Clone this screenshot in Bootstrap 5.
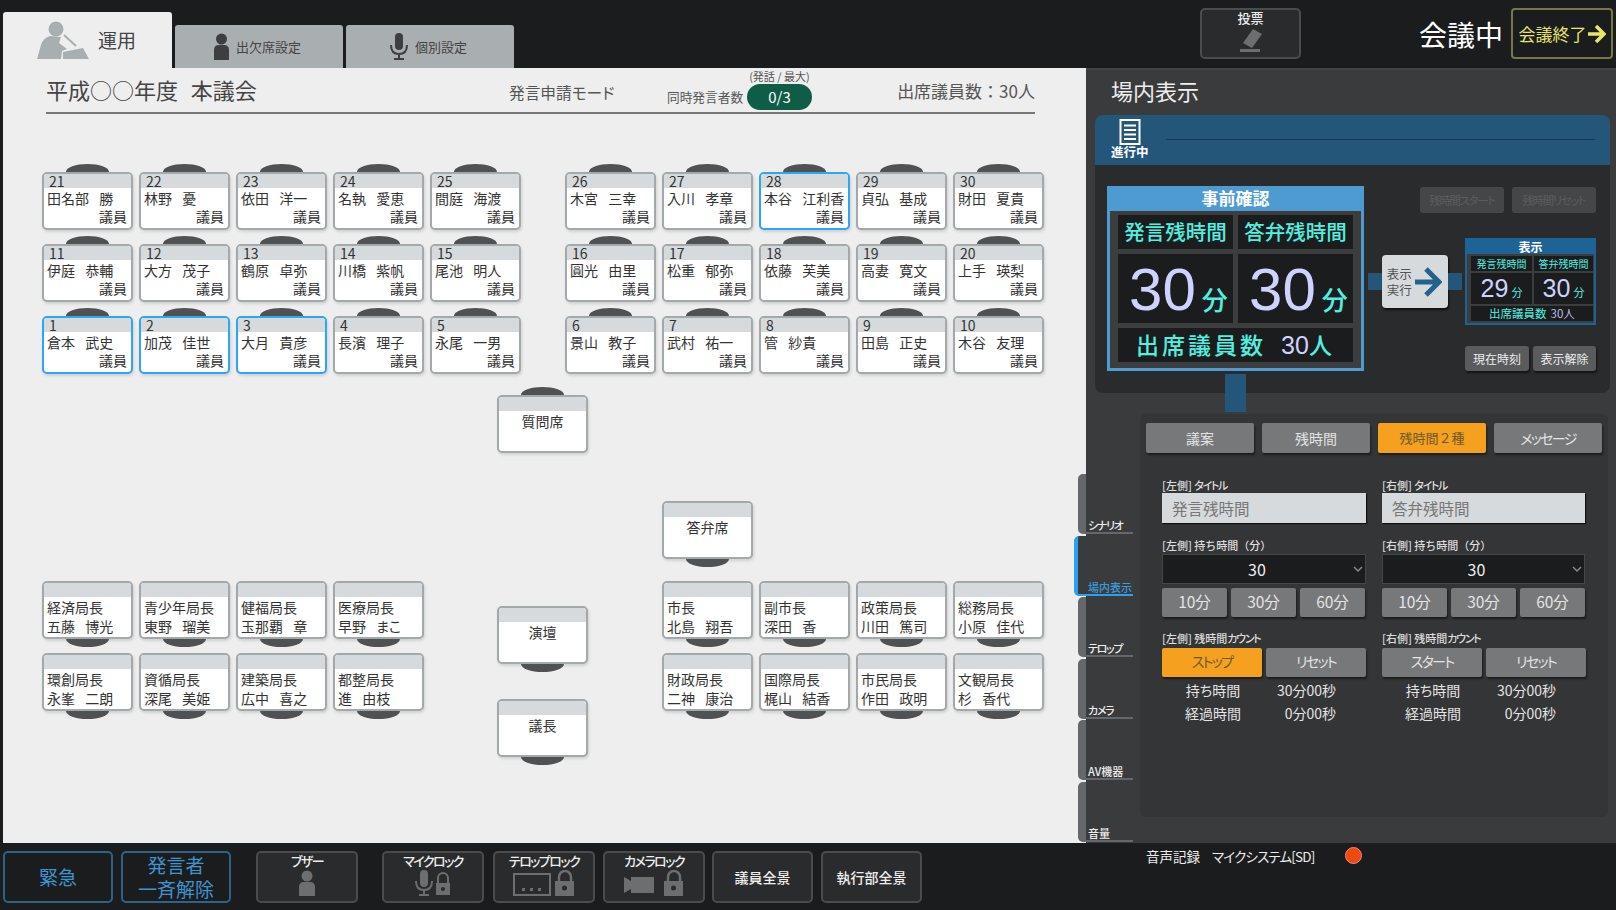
<!DOCTYPE html>
<html lang="ja">
<head>
    <meta charset="UTF-8">
    <meta name="viewport" content="width=device-width, initial-scale=1.0">
    <title>会議運用</title>
    <link rel="stylesheet" href="https://cdn.jsdelivr.net/npm/bootstrap@5.3.2/dist/css/bootstrap.min.css">
    <style>
        html, body { height: 910px; overflow: hidden; }
        body { background: #1b1c1e; font-family: "Noto Sans CJK JP", "Noto Sans", sans-serif; color: #333; font-feature-settings: "palt"; }
        svg { display: block; }
        /* narrow kana of the original UI font */
        .nk { letter-spacing: -.12em; }
        .full-w { font-feature-settings: normal; }

        /* top bar */
        .top-bar { height: 68px; padding-left: 3px; }
        .tab-main { width: 169px; height: 56px; margin-top: 12px; background: #eee; border-radius: 3px 3px 0 0; padding-left: 34px; gap: 9px; font-size: 19px; color: #444; }
        .tab-sub { width: 168px; height: 43px; margin: 25px 0 0 3px; background: #a9aeb0; border-radius: 3px 3px 0 0; gap: 7px; padding-right: 3px; font-size: 13px; color: #444; }
        .dark-btn { background: #2a2b2d; border: 2px solid #4b4c4e; border-radius: 5px; color: #eee; font-size: 13px; line-height: 15px; font-weight: 500; }
        .vote-btn { width: 101px; height: 51px; margin: 8px 0 0 auto; gap: 3px; }
        .status-txt { width: 85px; margin: 0 0 0 118px; color: #fff; font-size: 28px; line-height: 68px; white-space: nowrap; }
        .end-btn { width: 102px; height: 51px; margin: 8px 3px 0 7px; border: 2px solid #77774a; border-radius: 4px; color: #e6e66a; font-size: 17px; gap: 1px; white-space: nowrap; }

        /* main area */
        .mid-row { height: 775px; }
        .main-area { width: 1083px; margin-left: 3px; background: #eee; }
        .main-head { height: 46px; margin: 0 51px 0 43px; border-bottom: 2px solid #777; }
        .main-title { font-size: 22px; line-height: 42px; width: 463px; white-space: pre; color: #444; word-spacing: 1.5px; }
        .mode-txt { font-size: 15.7px; width: 158px; margin-top: 13px; color: #555; white-space: nowrap; }
        .count-txt { font-size: 12.7px; margin-top: 19px; width: 80px; color: #555; white-space: nowrap; }
        .count-wrap { width: 65px; position: relative; margin-top: 16px; }
        .count-cap { position: absolute; top: -15px; left: -8px; width: 81px; text-align: center; font-size: 11px; line-height: 14px; color: #555; }
        .count-pill { height: 26px; border-radius: 13px; background: #0f5c47; color: #fff; font-size: 15px; line-height: 26px; text-align: center; }
        .attend-txt { font-size: 17px; margin: 10px 0 0 auto; color: #555; white-space: nowrap; font-feature-settings: normal; }

        /* seating plan: seats sit on a free canvas */
        .floor { height: 729px; }
        .seat-group { position: absolute; display: grid; grid-template-columns: repeat(5, 91px); column-gap: 6px; row-gap: 14px; }
        .seat-group.four { grid-template-columns: repeat(4, 91px); }
        .seat-box { position: relative; width: 91px; height: 58px; background: #fff; border: 2px solid #a3a8aa; border-radius: 5px; box-shadow: 1px 2px 3px rgba(0,0,0,.12); font-size: 14px; line-height: 18px; color: #333; }
        .seat-box.on { border-color: #2ea6f5; }
        .seat-box::before { content: ""; position: absolute; left: 22px; width: 43px; height: 8px; background: #505153; }
        .seat-box.up::before { top: -10px; border-radius: 50% 50% 0 0 / 100% 100% 0 0; }
        .seat-box.down::before { bottom: -10px; border-radius: 0 0 50% 50% / 0 0 100% 100%; }
        .seat-no { height: 14px; background: #d6dadd; border-radius: 3px 3px 0 0; padding-left: 5px; line-height: 15px; font-size: 14px; }
        .seat-name { padding-left: 3px; margin-top: 1px; word-spacing: 7px; white-space: nowrap; }
        .seat-role { text-align: right; padding-right: 4px; }
        .seat-mid { text-align: center; margin-top: 1px; }
        .seat-single { position: absolute; }

        /* right panel */
        .right-area { width: 530px; background: #3a3b3d; border-top: 2px solid #444; }
        .right-title { margin: 0 0 4px; padding-left: 25px; font-size: 22px; line-height: 41px; color: #eee; font-weight: 400; }
        .disp-head { height: 50px; margin: 0 6px 0 9px; background: #24567a; border-radius: 8px 8px 0 0; padding-left: 16px; }
        .doc-wrap { width: 55px; color: #fff; font-size: 12.5px; line-height: 14px; font-weight: 700; white-space: nowrap; margin-top: 4px; }
        .disp-line { height: 1px; flex: 1; background: #183a54; margin: 24px 15px 0 0; }
        .disp-body { height: 228px; margin: 0 6px 0 9px; background: #2a2b2d; border-radius: 0 0 8px 8px; padding: 21px 14px 0 12px; }

        .prev-box { width: 257px; height: 185px; background: #3c3d3f; border: 3px solid #4e9bd2; }
        .prev-head { height: 24px; margin: -2px 0 0; background: #4e9bd2; color: #fff; font-size: 17px; line-height: 22px; font-weight: 700; text-align: center; }
        .prev-grid { display: grid; grid-template-columns: 115px 115px; gap: 5px; padding: 4px 8px; }
        .prev-cell { background: #1b1c1e; color: #4ff0e0; text-align: center; white-space: nowrap; }
        .prev-label { height: 34px; font-size: 20.5px; line-height: 33px; font-weight: 500; font-feature-settings: normal; }
        .prev-num { height: 69px; padding: 3px 0 0 6px; line-height: 66px; font-size: 26px; font-weight: 500; }
        .big-num { font-family: "Liberation Sans", Arial, sans-serif; font-size: 60px; line-height: 66px; color: #cfd2ff; margin-right: 6px; font-weight: 400; }
        .prev-foot { grid-column: 1 / 3; height: 34px; line-height: 33px; font-size: 23px; font-weight: 500; letter-spacing: 3px; }
        .prev-foot span { font-family: "Liberation Sans", Arial, sans-serif; font-size: 25px; color: #cfd2ff; margin-left: 15px; letter-spacing: 0; font-weight: 400; }

        .side-col { width: 232px; height: 184px; margin-top: 1px; }
        .ghost-btn { width: 84px; height: 26px; background: #454648; border-radius: 3px; color: #5c5d5f; font-size: 11.5px; line-height: 26px; text-align: center; white-space: nowrap; }
        .link-bar { width: 14px; height: 17px; background: #24567a; }
        .exec-mid { margin-top: 4px; }
        .exec-btn { width: 67px; height: 53px; background: #d6dadd; border-radius: 4px; box-shadow: 1px 2px 2px #111; color: #555; font-size: 12.5px; line-height: 16px; gap: 2px; padding-left: 5px; }
        .mini-box { width: 131px; height: 87px; margin-left: 3px; background: #3c3d3f; border: 2px solid #1e6396; }
        .mini-head { height: 14px; background: #1e6396; color: #fff; font-size: 12px; line-height: 14px; font-weight: 700; text-align: center; }
        .mini-grid { display: grid; grid-template-columns: 61px 59px; gap: 2px; padding: 2px 4px; }
        .mini-label { height: 15px; font-size: 10px; line-height: 15px; }
        .mini-num { height: 31px; font-size: 11px; line-height: 30px; }
        .mini-num b { font-family: "Liberation Sans", Arial, sans-serif; font-size: 25px; font-weight: 400; color: #cfd2ff; margin-right: 3px; }
        .mini-foot { grid-column: 1 / 3; height: 15px; font-size: 11.5px; line-height: 15px; }
        .mini-foot span { color: #bcbfe6; margin-left: 4px; }
        .sm-btn { height: 25px; background: #5a5b5d; border-radius: 3px; box-shadow: 1px 2px 2px #151515; color: #eee; font-size: 12px; line-height: 25px; text-align: center; }
        .link-down { position: absolute; left: 139px; top: 304px; width: 21px; height: 38px; background: #24567a; }

        /* side tabs lie over the edge of the main area */
        .side-tabs { position: absolute; left: -8px; top: 404px; width: 55px; }
        .side-tab { position: relative; height: 60px; margin-bottom: 1.5px; padding-left: 2px; color: #eee; font-size: 11px; font-weight: 500; line-height: 14px; background: #3a3b3d; border-left: 8px solid #66676a; border-radius: 5px 0 0 5px; display: flex; align-items: flex-end; padding-bottom: 2px; white-space: nowrap; }
        .side-tab::after { content: ""; position: absolute; left: 0; right: 0; bottom: 0; height: 2px; background: #66676a; }
        .side-tab.now { color: #3a9ad9; border-left: 4px solid #2d9ff0; margin-left: -4px; padding-left: 10px; width: 59px; }
        .side-tab.now::after { background: #2d9ff0; }

        .ctrl-area { height: 403px; margin: 21px 8px 0 54px; background: #343537; border-radius: 6px; padding: 9px 6px; }
        .kind-row { display: grid; grid-template-columns: repeat(4, 108px); gap: 8px; }
        .gray-btn { background: #76787a; border-radius: 2px; box-shadow: 1px 2px 2px #1c1c1c; color: #e4e4e4; text-align: center; white-space: nowrap; }
        .gray-btn.orange { background: #f5a01e; color: #6e5a2c; }
        .kind-row .gray-btn { height: 30px; line-height: 30px; font-size: 14px; }
        .kind-row .full-w { font-size: 13px; }
        .ctrl-grid { display: grid; grid-template-columns: 204px 203px; column-gap: 16px; margin: 26px 0 0 16px; }
        .ctrl-label { height: 14px; font-size: 11px; line-height: 13px; color: #ddd; font-weight: 500; white-space: nowrap; }
        .title-input { height: 30px; background: #d6dadd; box-shadow: 1px 1px 1px #111; color: #777; font-size: 15.5px; line-height: 30px; padding-left: 10px; }
        .min-select { height: 30px; margin-top: 1px; padding-right: 14px; background-color: #1b1c1e; border: 1px solid #464749; color: #eee; font-size: 16px; line-height: 28px; text-align: center; position: relative; }
        .sel-caret { position: absolute; right: 2px; top: 11px; }
        .min-row { display: grid; grid-template-columns: repeat(3, 65px); gap: 4px; margin-top: 4px; }
        .min-row .gray-btn { height: 29px; line-height: 27px; font-size: 15.5px; }
        .cnt-row { display: grid; grid-template-columns: repeat(2, 100px); gap: 4px; margin-top: 2px; }
        .cnt-row .gray-btn { height: 29px; line-height: 27px; font-size: 14px; }
        .time-row { display: flex; height: 23px; line-height: 23px; font-size: 14px; color: #e4e4e4; white-space: nowrap; }
        .time-row.first { margin-top: 2px; }
        .time-row span:first-child { width: 102px; text-align: center; }
        .time-row span:last-child { width: 72px; text-align: right; }
        .sp16 { margin-top: 16px; }
        .sp15 { margin-top: 15px; }

        /* bottom bar */
        .bottom-bar { height: 67px; padding: 8px 0 0 3px; }
        .blue-btn { width: 110px; height: 52px; background: #1b1c1e; border: 2px solid #2d6388; border-radius: 5px; color: #3f93cf; font-size: 19px; line-height: 24px; text-align: center; }
        .tool-btn { width: 102px; height: 52px; gap: 2px; }
        .plain-btn { width: 101px; height: 52px; font-size: 14px; }
        .rec-box { margin: -9px 0 0 224px; color: #eee; font-size: 13.5px; height: 28px; line-height: 28px; white-space: nowrap; }
        .rec-mic { width: 103px; margin-left: 12px; letter-spacing: -.06em; }
        .rec-dot { width: 17px; height: 17px; border-radius: 50%; background: #f04a0a; border: 1px solid #e88; margin: 5px 0 0 30px; }
    </style>
</head>
<body>
    <div class="top-bar d-flex">
        <div class="tab-main d-flex align-items-center">
            <svg width="52" height="38" viewBox="0 0 52 38" fill="#a9aeb0"><circle cx="19" cy="8" r="7.5"/><path d="M0 38 L4 24 Q6 17 13 15 L24 16 L22 22 L30 28 L25 30 L24 38Z"/><path d="M27 14 L39 25" stroke="#a9aeb0" stroke-width="2" fill="none"/><path d="M26 31 L46 27 L52 38 L26 38Z"/></svg>
            <span>運用</span>
        </div>
        <div class="tab-sub d-flex align-items-center justify-content-center">
            <svg width="15" height="27" viewBox="0 0 15 27" fill="#3d3e40"><circle cx="7.5" cy="6" r="5.5"/><path d="M0 27 L0 17 Q0 12 5 12 L10 12 Q15 12 15 17 L15 27Z"/></svg>
            <span>出欠席設定</span>
        </div>
        <div class="tab-sub d-flex align-items-center justify-content-center">
            <svg width="18" height="27" viewBox="0 0 18 27" fill="none" stroke="#3d3e40" stroke-width="2"><rect x="5" y="0" width="8" height="17" rx="4" fill="#3d3e40" stroke="none"/><path d="M1 12 Q1 21 9 21 Q17 21 17 12 M9 21 V26 M4 26 H14"/></svg>
            <span>個別設定</span>
        </div>
        <div class="vote-btn dark-btn d-flex flex-column align-items-center">
            <span>投票</span>
            <svg width="24" height="26" viewBox="0 0 24 26" fill="#6d6e70"><path d="M14 1 L23 6 L13 20 L4 15Z"/><rect x="1" y="21" width="20" height="3"/></svg>
        </div>
        <div class="status-txt">会議中</div>
        <div class="end-btn d-flex align-items-center justify-content-center">
            <span>会議終了</span>
            <svg width="18" height="20" viewBox="0 0 18 20" fill="none" stroke="#e6e66a" stroke-width="3.5"><path d="M0 10 H15 M8 2 L16 10 L8 18"/></svg>
        </div>
    </div>

    <div class="mid-row d-flex">
        <div class="main-area">
            <div class="main-head d-flex">
                <div class="main-title">平成○○年度  本議会</div>
                <div class="mode-txt">発言申請モード</div>
                <div class="count-txt">同時発言者数</div>
                <div class="count-wrap">
                    <div class="count-cap">(発話 / 最大)</div>
                    <div class="count-pill">0/3</div>
                </div>
                <div class="attend-txt">出席議員数：30人</div>
            </div>
            <div class="floor position-relative">
                <div class="seat-group" style="left:39px;top:58px">
                    <div class="seat-box up"><div class="seat-no">21</div><div class="seat-name">田名部 勝</div><div class="seat-role">議員</div></div>
                    <div class="seat-box up"><div class="seat-no">22</div><div class="seat-name">林野 憂</div><div class="seat-role">議員</div></div>
                    <div class="seat-box up"><div class="seat-no">23</div><div class="seat-name">依田 洋一</div><div class="seat-role">議員</div></div>
                    <div class="seat-box up"><div class="seat-no">24</div><div class="seat-name">名執 愛恵</div><div class="seat-role">議員</div></div>
                    <div class="seat-box up"><div class="seat-no">25</div><div class="seat-name">間庭 海渡</div><div class="seat-role">議員</div></div>
                    <div class="seat-box up"><div class="seat-no">11</div><div class="seat-name">伊庭 恭輔</div><div class="seat-role">議員</div></div>
                    <div class="seat-box up"><div class="seat-no">12</div><div class="seat-name">大方 茂子</div><div class="seat-role">議員</div></div>
                    <div class="seat-box up"><div class="seat-no">13</div><div class="seat-name">鶴原 卓弥</div><div class="seat-role">議員</div></div>
                    <div class="seat-box up"><div class="seat-no">14</div><div class="seat-name">川橋 紫帆</div><div class="seat-role">議員</div></div>
                    <div class="seat-box up"><div class="seat-no">15</div><div class="seat-name">尾池 明人</div><div class="seat-role">議員</div></div>
                    <div class="seat-box up on"><div class="seat-no">1</div><div class="seat-name">倉本 武史</div><div class="seat-role">議員</div></div>
                    <div class="seat-box up on"><div class="seat-no">2</div><div class="seat-name">加茂 佳世</div><div class="seat-role">議員</div></div>
                    <div class="seat-box up on"><div class="seat-no">3</div><div class="seat-name">大月 貴彦</div><div class="seat-role">議員</div></div>
                    <div class="seat-box up"><div class="seat-no">4</div><div class="seat-name">長濱 理子</div><div class="seat-role">議員</div></div>
                    <div class="seat-box up"><div class="seat-no">5</div><div class="seat-name">永尾 一男</div><div class="seat-role">議員</div></div>
                </div>
                <div class="seat-group" style="left:562px;top:58px">
                    <div class="seat-box up"><div class="seat-no">26</div><div class="seat-name">木宮 三幸</div><div class="seat-role">議員</div></div>
                    <div class="seat-box up"><div class="seat-no">27</div><div class="seat-name">入川 孝章</div><div class="seat-role">議員</div></div>
                    <div class="seat-box up on"><div class="seat-no">28</div><div class="seat-name">本谷 江利香</div><div class="seat-role">議員</div></div>
                    <div class="seat-box up"><div class="seat-no">29</div><div class="seat-name">貞弘 基成</div><div class="seat-role">議員</div></div>
                    <div class="seat-box up"><div class="seat-no">30</div><div class="seat-name">財田 夏貴</div><div class="seat-role">議員</div></div>
                    <div class="seat-box up"><div class="seat-no">16</div><div class="seat-name">圓光 由里</div><div class="seat-role">議員</div></div>
                    <div class="seat-box up"><div class="seat-no">17</div><div class="seat-name">松重 郁弥</div><div class="seat-role">議員</div></div>
                    <div class="seat-box up"><div class="seat-no">18</div><div class="seat-name">依藤 芙美</div><div class="seat-role">議員</div></div>
                    <div class="seat-box up"><div class="seat-no">19</div><div class="seat-name">高妻 寛文</div><div class="seat-role">議員</div></div>
                    <div class="seat-box up"><div class="seat-no">20</div><div class="seat-name">上手 瑛梨</div><div class="seat-role">議員</div></div>
                    <div class="seat-box up"><div class="seat-no">6</div><div class="seat-name">景山 教子</div><div class="seat-role">議員</div></div>
                    <div class="seat-box up"><div class="seat-no">7</div><div class="seat-name">武村 祐一</div><div class="seat-role">議員</div></div>
                    <div class="seat-box up"><div class="seat-no">8</div><div class="seat-name">管 紗貴</div><div class="seat-role">議員</div></div>
                    <div class="seat-box up"><div class="seat-no">9</div><div class="seat-name">田島 正史</div><div class="seat-role">議員</div></div>
                    <div class="seat-box up"><div class="seat-no">10</div><div class="seat-name">木谷 友理</div><div class="seat-role">議員</div></div>
                </div>

                <div class="seat-box up seat-single" style="left:494px;top:281px"><div class="seat-no"></div><div class="seat-mid">質問席</div></div>
                <div class="seat-box down seat-single" style="left:659px;top:387px"><div class="seat-no"></div><div class="seat-mid">答弁席</div></div>
                <div class="seat-box down seat-single" style="left:494px;top:492px"><div class="seat-no"></div><div class="seat-mid">演壇</div></div>
                <div class="seat-box down seat-single" style="left:494px;top:585px"><div class="seat-no"></div><div class="seat-mid">議長</div></div>

                <div class="seat-group four" style="left:39px;top:467px">
                    <div class="seat-box down"><div class="seat-no"></div><div class="seat-name">経済局長</div><div class="seat-name">五藤 博光</div></div>
                    <div class="seat-box down"><div class="seat-no"></div><div class="seat-name">青少年局長</div><div class="seat-name">東野 瑠美</div></div>
                    <div class="seat-box down"><div class="seat-no"></div><div class="seat-name">健福局長</div><div class="seat-name">玉那覇 章</div></div>
                    <div class="seat-box down"><div class="seat-no"></div><div class="seat-name">医療局長</div><div class="seat-name">早野 まこ</div></div>
                    <div class="seat-box down"><div class="seat-no"></div><div class="seat-name">環創局長</div><div class="seat-name">永峯 二朗</div></div>
                    <div class="seat-box down"><div class="seat-no"></div><div class="seat-name">資循局長</div><div class="seat-name">深尾 美姫</div></div>
                    <div class="seat-box down"><div class="seat-no"></div><div class="seat-name">建築局長</div><div class="seat-name">広中 喜之</div></div>
                    <div class="seat-box down"><div class="seat-no"></div><div class="seat-name">都整局長</div><div class="seat-name">進 由枝</div></div>
                </div>
                <div class="seat-group four" style="left:659px;top:467px">
                    <div class="seat-box down"><div class="seat-no"></div><div class="seat-name">市長</div><div class="seat-name">北島 翔吾</div></div>
                    <div class="seat-box down"><div class="seat-no"></div><div class="seat-name">副市長</div><div class="seat-name">深田 香</div></div>
                    <div class="seat-box down"><div class="seat-no"></div><div class="seat-name">政策局長</div><div class="seat-name">川田 篤司</div></div>
                    <div class="seat-box down"><div class="seat-no"></div><div class="seat-name">総務局長</div><div class="seat-name">小原 佳代</div></div>
                    <div class="seat-box down"><div class="seat-no"></div><div class="seat-name">財政局長</div><div class="seat-name">二神 康治</div></div>
                    <div class="seat-box down"><div class="seat-no"></div><div class="seat-name">国際局長</div><div class="seat-name">梶山 結香</div></div>
                    <div class="seat-box down"><div class="seat-no"></div><div class="seat-name">市民局長</div><div class="seat-name">作田 政明</div></div>
                    <div class="seat-box down"><div class="seat-no"></div><div class="seat-name">文観局長</div><div class="seat-name">杉 香代</div></div>
                </div>
            </div>
        </div>

        <div class="right-area position-relative">
            <h5 class="right-title">場内表示</h5>
            <div class="disp-head d-flex">
                <div class="doc-wrap d-flex flex-column align-items-start">
                    <svg class="ms-2" width="22" height="26" viewBox="0 0 22 26" fill="none" stroke="#fff" stroke-width="2"><rect x="1.5" y="1" width="19" height="24"/><path d="M5 6.5 H17 M5 11 H17 M5 15.5 H17 M5 20 H17"/></svg>
                    <span>進行中</span>
                </div>
                <div class="disp-line"></div>
            </div>
            <div class="disp-body d-flex">
                <div class="prev-box">
                    <div class="prev-head">事前確認</div>
                    <div class="prev-grid">
                        <div class="prev-cell prev-label">発言残時間</div>
                        <div class="prev-cell prev-label">答弁残時間</div>
                        <div class="prev-cell prev-num"><span class="big-num">30</span>分</div>
                        <div class="prev-cell prev-num"><span class="big-num">30</span>分</div>
                        <div class="prev-cell prev-foot">出席議員数<span>30</span>人</div>
                    </div>
                </div>
                <div class="side-col d-flex flex-column justify-content-between">
                    <div class="d-flex justify-content-end gap-2">
                        <div class="ghost-btn nk">残時間スタート</div>
                        <div class="ghost-btn nk">残時間リセット</div>
                    </div>
                    <div class="exec-mid d-flex align-items-center ps-1">
                        <div class="link-bar"></div>
                        <div class="exec-btn d-flex align-items-center">
                            <span>表示<br>実行</span>
                            <svg width="28" height="32" viewBox="0 0 28 32" fill="none" stroke="#24618c" stroke-width="5"><path d="M1 16 H24 M12 3 L25 16 L12 29"/></svg>
                        </div>
                        <div class="link-bar"></div>
                        <div class="mini-box">
                            <div class="mini-head">表示</div>
                            <div class="mini-grid">
                                <div class="prev-cell mini-label">発言残時間</div>
                                <div class="prev-cell mini-label">答弁残時間</div>
                                <div class="prev-cell mini-num"><b>29</b>分</div>
                                <div class="prev-cell mini-num"><b>30</b>分</div>
                                <div class="prev-cell mini-foot">出席議員数<span>30人</span></div>
                            </div>
                        </div>
                    </div>
                    <div class="d-flex justify-content-end gap-1">
                        <div class="sm-btn" style="width:64px">現在時刻</div>
                        <div class="sm-btn" style="width:63px">表示解除</div>
                    </div>
                </div>
            </div>
            <div class="link-down"></div>

            <div class="side-tabs">
                <div class="side-tab"><span class="nk">シナリオ</span></div>
                <div class="side-tab now">場内表示</div>
                <div class="side-tab"><span class="nk">テロップ</span></div>
                <div class="side-tab"><span class="nk">カメラ</span></div>
                <div class="side-tab">AV機器</div>
                <div class="side-tab">音量</div>
            </div>

            <div class="ctrl-area">
                <div class="kind-row">
                    <div class="gray-btn">議案</div>
                    <div class="gray-btn">残時間</div>
                    <div class="gray-btn orange full-w">残時間２種</div>
                    <div class="gray-btn nk">メッセージ</div>
                </div>
                <div class="ctrl-grid">
                    <div>
                        <div class="ctrl-label">[左側] <span class="nk">タイトル</span></div>
                        <div class="title-input">発言残時間</div>
                        <div class="ctrl-label full-w sp16">[左側] 持ち時間（分）</div>
                        <div class="min-select">30<svg class="sel-caret" width="10" height="7" viewBox="0 0 10 7" fill="none" stroke="#888" stroke-width="1.5"><path d="M1 1 L5 5 L9 1"/></svg></div>
                        <div class="min-row">
                            <div class="gray-btn">10分</div>
                            <div class="gray-btn">30分</div>
                            <div class="gray-btn">60分</div>
                        </div>
                        <div class="ctrl-label sp15">[左側] 残時間<span class="nk">カウント</span></div>
                        <div class="cnt-row">
                            <div class="gray-btn orange nk">ストップ</div>
                            <div class="gray-btn nk">リセット</div>
                        </div>
                        <div class="time-row first"><span>持ち時間</span><span>30分00秒</span></div>
                        <div class="time-row"><span>経過時間</span><span>0分00秒</span></div>
                    </div>
                    <div>
                        <div class="ctrl-label">[右側] <span class="nk">タイトル</span></div>
                        <div class="title-input">答弁残時間</div>
                        <div class="ctrl-label full-w sp16">[右側] 持ち時間（分）</div>
                        <div class="min-select">30<svg class="sel-caret" width="10" height="7" viewBox="0 0 10 7" fill="none" stroke="#888" stroke-width="1.5"><path d="M1 1 L5 5 L9 1"/></svg></div>
                        <div class="min-row">
                            <div class="gray-btn">10分</div>
                            <div class="gray-btn">30分</div>
                            <div class="gray-btn">60分</div>
                        </div>
                        <div class="ctrl-label sp15">[右側] 残時間<span class="nk">カウント</span></div>
                        <div class="cnt-row">
                            <div class="gray-btn nk">スタート</div>
                            <div class="gray-btn nk">リセット</div>
                        </div>
                        <div class="time-row first"><span>持ち時間</span><span>30分00秒</span></div>
                        <div class="time-row"><span>経過時間</span><span>0分00秒</span></div>
                    </div>
                </div>
            </div>
        </div>
    </div>

    <div class="bottom-bar d-flex">
        <div class="blue-btn d-flex align-items-center justify-content-center">緊急</div>
        <div class="blue-btn ms-2">発言者<br>一斉解除</div>
        <div class="tool-btn dark-btn d-flex flex-column align-items-center" style="margin-left:25px">
            <span class="nk">ブザー</span>
            <svg width="18" height="27" viewBox="0 0 18 27" fill="#6d6e70"><circle cx="9" cy="6" r="5.5"/><path d="M1 26 L1 17 Q1 12 6 12 L12 12 Q17 12 17 17 L17 26Z"/></svg>
        </div>
        <div class="tool-btn dark-btn d-flex flex-column align-items-center" style="margin-left:24px">
            <span class="nk">マイクロック</span>
            <svg width="38" height="27" viewBox="0 0 38 27" fill="#6d6e70"><rect x="6" y="0" width="8" height="17" rx="4"/><path d="M2 11 Q2 20 10 20 Q18 20 18 11 M10 20 V25 M5 25 H15" fill="none" stroke="#6d6e70" stroke-width="2"/><path d="M24 13 V8 a5 5 0 0 1 10 0 V13" fill="none" stroke="#6d6e70" stroke-width="2"/><rect x="22" y="13" width="14" height="12"/><circle cx="29" cy="19" r="2" fill="#2a2b2d"/></svg>
        </div>
        <div class="tool-btn dark-btn d-flex flex-column align-items-center" style="margin-left:9px">
            <span class="nk">テロップロック</span>
            <svg width="62" height="27" viewBox="0 0 62 27" fill="#6d6e70"><rect x="1" y="4" width="36" height="21" fill="none" stroke="#6d6e70" stroke-width="2"/><rect x="9" y="18" width="3" height="3"/><rect x="17" y="18" width="3" height="3"/><rect x="25" y="18" width="3" height="3"/><path d="M46 11 V7 a6 6 0 0 1 12 0 V11" fill="none" stroke="#6d6e70" stroke-width="2.5"/><rect x="42" y="11" width="19" height="15"/><circle cx="51.5" cy="18" r="2.5" fill="#2a2b2d"/></svg>
        </div>
        <div class="tool-btn dark-btn d-flex flex-column align-items-center" style="margin-left:8px">
            <span class="nk">カメラロック</span>
            <svg width="60" height="27" viewBox="0 0 60 27" fill="#6d6e70"><path d="M0 7 L7 11 L7 7 L30 7 L30 23 L7 23 L7 19 L0 23Z"/><path d="M44 11 V7 a6 6 0 0 1 12 0 V11" fill="none" stroke="#6d6e70" stroke-width="2.5"/><rect x="40" y="11" width="19" height="15"/><circle cx="49.5" cy="18" r="2.5" fill="#2a2b2d"/></svg>
        </div>
        <div class="plain-btn dark-btn d-flex align-items-center justify-content-center" style="margin-left:7px">議員全景</div>
        <div class="plain-btn dark-btn d-flex align-items-center justify-content-center" style="margin-left:8px">執行部全景</div>
        <div class="rec-box d-flex">
            <span>音声記録</span>
            <span class="rec-mic nk">マイクシステム[SD]</span>
            <span class="rec-dot"></span>
        </div>
    </div>

    <script src="https://cdn.jsdelivr.net/npm/bootstrap@5.3.2/dist/js/bootstrap.bundle.min.js"></script>
</body>
</html>
